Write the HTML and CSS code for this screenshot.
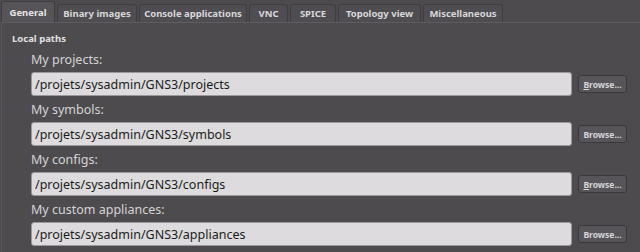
FILE: index.html
```html
<!DOCTYPE html>
<html lang="en">
<head>
    <meta charset="UTF-8">
    <title>Preferences - General</title>
    <link rel="stylesheet" href="styles.css">
</head>
<body>
    <div class="tabs">
        <div class="tab active" style="width: 54px">General</div>
        <div class="tab" style="width: 80px">Binary images</div>
        <div class="tab" style="width: 108px">Console applications</div>
        <div class="tab" style="width: 39px">VNC</div>
        <div class="tab" style="width: 46px">SPICE</div>
        <div class="tab" style="width: 83px">Topology view</div>
        <div class="tab" style="width: 80px">Miscellaneous</div>
    </div>
    <div class="pane">
        <div class="group-title">Local paths</div>
        <div class="rows">
            <div class="row">
                <label>My projects:</label>
                <div class="field">
                    <input type="text" value="/projets/sysadmin/GNS3/projects">
                    <button type="button"><u>B</u>rowse...</button>
                </div>
            </div>
            <div class="row">
                <label>My symbols:</label>
                <div class="field">
                    <input type="text" value="/projets/sysadmin/GNS3/symbols">
                    <button type="button">Browse...</button>
                </div>
            </div>
            <div class="row">
                <label>My configs:</label>
                <div class="field">
                    <input type="text" value="/projets/sysadmin/GNS3/configs">
                    <button type="button"><u>B</u>rowse...</button>
                </div>
            </div>
            <div class="row">
                <label>My custom appliances:</label>
                <div class="field">
                    <input type="text" value="/projets/sysadmin/GNS3/appliances">
                    <button type="button">Browse...</button>
                </div>
            </div>
        </div>
    </div>
</body>
</html>
```

FILE: styles.css
```css
body {
    margin: 0;
    background-color: #4d4b4e;
    font-family: "Noto Sans", sans-serif;
    color: #dddbdd;
    overflow: hidden;
}
.tabs {
    display: flex;
    align-items: flex-end;
    gap: 2px;
    height: 22px;
    padding-left: 1px;
}
.tab {
    height: 18px;
    box-sizing: border-box;
    display: flex;
    align-items: center;
    justify-content: center;
    background: #4f4d51;
    border: 1px solid #3f3d40;
    border-bottom: none;
    border-radius: 3px 3px 0 0;
    font-size: 9.5px;
    font-weight: bold;
    color: #d9d7d9;
}
.tab.active {
    height: 21px;
    background: #565458;
    color: #e6e4e6;
}
.pane {
    border-top: 1px solid #5e5c5f;
    border-left: 1px solid #59575a;
    margin-left: 1px;
    padding: 9px 0 0 10px;
    height: 220px;
}
.group-title {
    font-size: 9.5px;
    font-weight: bold;
    line-height: 14px;
    color: #e2e0e2;
}
.rows {
    padding: 2px 0 0 19px;
}
.row {
    margin-bottom: 2px;
}
label {
    display: block;
    height: 24px;
    line-height: 24px;
    font-size: 12.5px;
    color: #d6d4d6;
}
.field {
    display: flex;
    align-items: center;
    gap: 6px;
}
input {
    width: 541px;
    height: 24px;
    box-sizing: border-box;
    padding: 0 3px;
    font-family: "Noto Sans", sans-serif;
    font-size: 12.5px;
    color: #1c1c1c;
    background: #dddbdd;
    border: 1px solid #9a989b;
    border-radius: 3px;
}
button {
    width: 49px;
    height: 18px;
    padding: 0;
    font-family: "Noto Sans", sans-serif;
    font-size: 8.5px;
    font-weight: bold;
    color: #d8d6d8;
    background: #575559;
    border: 1px solid #3a383b;
    border-radius: 3px;
}
```
